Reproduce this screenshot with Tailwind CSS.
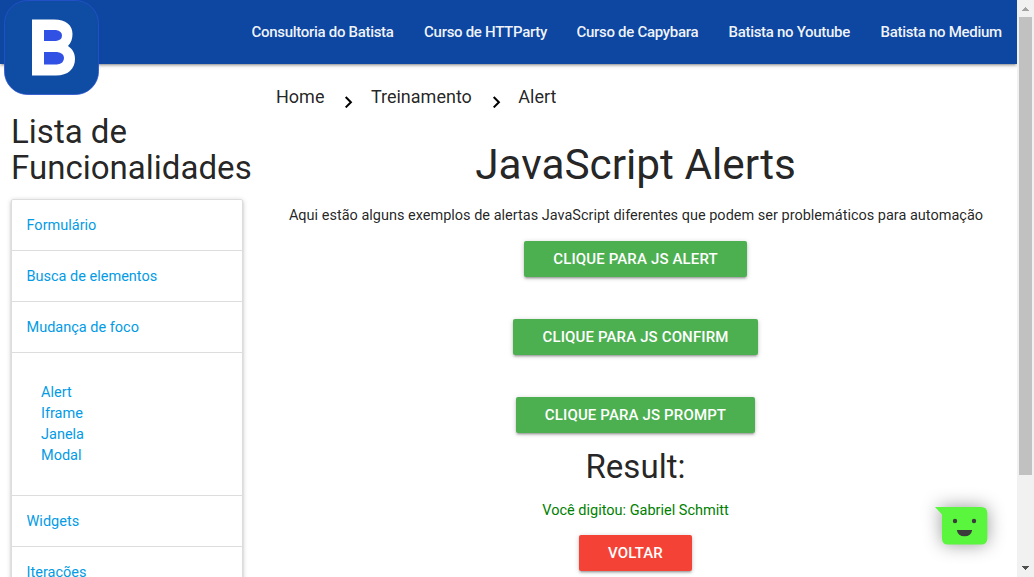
<!DOCTYPE html>
<html lang="pt-BR">
<head>
<meta charset="utf-8">
<title>JavaScript Alerts</title>
<script src="https://cdn.jsdelivr.net/npm/@tailwindcss/browser@4"></script>
</head>
<body class="flex h-[577px] w-[1034px] overflow-hidden bg-white font-[Roboto,sans-serif] text-[14.5px] leading-[21.75px] text-black/87">
<div class="relative h-full w-[1017px] shrink-0 overflow-hidden">
  <nav class="relative z-10 flex h-16 justify-end bg-[#0d47a1] text-[15px] leading-16 font-medium tracking-[-0.3px] text-white/95 shadow-[0_2px_2px_0_rgba(0,0,0,0.14),0_3px_1px_-2px_rgba(0,0,0,0.12),0_1px_5px_0_rgba(0,0,0,0.2)]">
    <svg class="absolute top-0 left-1 h-[95px] w-[95px]" viewBox="0 0 95 95">
      <rect x=".5" y=".5" width="94" height="94" rx="23" fill="#0f4ca3" stroke="#2850cf" stroke-width=".8"/>
      <path d="M28 19.500H50C62 19.500 68.500 25 68.500 34C68.500 39 67 43 64 46C68.500 49 71 53 71 59C71 69 64 75.500 52 75.500H28Z" fill="#fff"/>
      <path d="M40 30H52Q58 31 58 35.500Q58 40 52 41H40ZM40 52H53Q60 53 60 58Q60 63.500 53 64.500H40Z" fill="#3150e4"/>
    </svg>
    <a class="w-[172.600px] px-[15px] whitespace-nowrap">Consultoria do Batista</a>
    <a class="w-[152.400px] px-[15px] whitespace-nowrap">Curso de HTTParty</a>
    <a class="w-[152px] px-[15px] whitespace-nowrap">Curso de Capybara</a>
    <a class="w-[152px] px-[15px] whitespace-nowrap">Batista no Youtube</a>
    <a class="w-[151.500px] px-[15px] whitespace-nowrap">Batista no Medium</a>
  </nav>
  <div class="flex">
    <aside class="w-[254px] shrink-0 pt-[50px] pl-[11px]">
      <h4 class="text-[33.06px] leading-[36.37px]">Lista de<br>Funcionalidades</h4>
      <ul class="mt-[12px] w-[232px] rounded-[2px] border border-[#ddd] text-[#039be5] shadow-[0_2px_2px_0_rgba(0,0,0,0.14),0_3px_1px_-2px_rgba(0,0,0,0.12),0_1px_5px_0_rgba(0,0,0,0.2)]">
        <li class="h-[51px] border-b border-[#ddd] px-[14.5px] leading-[52px]">Formulário</li>
        <li class="h-[51px] border-b border-[#ddd] px-[14.5px] leading-[52px]">Busca de elementos</li>
        <li class="h-[51px] border-b border-[#ddd] px-[14.5px] leading-[52px]">Mudança de foco</li>
        <li class="h-[143px] border-b border-[#ddd] px-[29px] pt-[29px] leading-[21px]">Alert<br>Iframe<br>Janela<br>Modal</li>
        <li class="h-[51px] border-b border-[#ddd] px-[14.5px] leading-[52px]">Widgets</li>
        <li class="h-[51px] px-[14.5px] leading-[52px]">Iterações</li>
      </ul>
    </aside>
    <main class="flex w-[763px] flex-col items-center">
      <div class="flex h-[66px] w-full items-start pt-[19px] pl-[22px] text-[18px] leading-[27px]">
        <span>Home</span>
        <svg class="mt-[13px] mr-[16.5px] ml-5 h-3 w-2.5" viewBox="0 0 10 12" fill="none" stroke="#000" stroke-width="2"><path d="M1.700 1L6.900 6.200L1.700 11.400"/></svg>
        <span>Treinamento</span>
        <svg class="mt-[13px] mr-[16.5px] ml-5 h-3 w-2.5" viewBox="0 0 10 12" fill="none" stroke="#000" stroke-width="2"><path d="M1.700 1L6.900 6.200L1.700 11.400"/></svg>
        <span>Alert</span>
      </div>
      <h3 class="mt-[12px] text-[42.34px] leading-[46.6px]">JavaScript Alerts</h3>
      <p class="mt-[16px] pl-px">Aqui estão alguns exemplos de alertas JavaScript diferentes que podem ser problemáticos para automação</p>
      <button class="mt-[15px] h-9 w-[223px] rounded-[2px] bg-[#4caf50] text-[15px] leading-9 font-medium tracking-[0.14px] text-white shadow-[0_2px_2px_0_rgba(0,0,0,0.14),0_3px_1px_-2px_rgba(0,0,0,0.12),0_1px_5px_0_rgba(0,0,0,0.2)]">CLIQUE PARA JS ALERT</button>
      <button class="mt-[42px] h-9 w-[245px] rounded-[2px] bg-[#4caf50] text-[15px] leading-9 font-medium tracking-[0.14px] text-white shadow-[0_2px_2px_0_rgba(0,0,0,0.14),0_3px_1px_-2px_rgba(0,0,0,0.12),0_1px_5px_0_rgba(0,0,0,0.2)]">CLIQUE PARA JS CONFIRM</button>
      <button class="mt-[42px] h-9 w-[239px] rounded-[2px] bg-[#4caf50] text-[15px] leading-9 font-medium tracking-[0.14px] text-white shadow-[0_2px_2px_0_rgba(0,0,0,0.14),0_3px_1px_-2px_rgba(0,0,0,0.12),0_1px_5px_0_rgba(0,0,0,0.2)]">CLIQUE PARA JS PROMPT</button>
      <h4 class="mt-[16px] text-[33.06px] leading-[36.37px]">Result:</h4>
      <p class="mt-[14px] text-[green]">Você digitou: Gabriel Schmitt</p>
      <button class="mt-[14px] h-9 w-[113px] rounded-[2px] bg-[#f44336] text-[15px] leading-9 font-medium tracking-[0.14px] text-white shadow-[0_2px_2px_0_rgba(0,0,0,0.14),0_3px_1px_-2px_rgba(0,0,0,0.12),0_1px_5px_0_rgba(0,0,0,0.2)]">VOLTAR</button>
    </main>
  </div>
  <svg class="absolute top-[507px] left-[935px] h-[38px] w-[53px] overflow-visible drop-shadow-[0_0_9px_rgba(0,0,0,0.4)]" viewBox="0 0 53 38">
    <path d="M0 0H46Q52.300 0 52.300 6V31.500Q52.300 37.500 46 37.500H13Q7 37.500 7 31.500V7.500Z" fill="#5af53d"/>
    <circle cx="20" cy="14" r="2.200" fill="#3b3b3b"/><circle cx="39" cy="14" r="2.200" fill="#3b3b3b"/>
    <path d="M21.800 23H37.200Q36 29.300 29.500 29.300T21.800 23Z" fill="#3b3b3b"/>
  </svg>
</div>
<div class="flex h-full w-[17px] flex-col items-center bg-[#f1f1f1]">
  <svg class="h-[17px] w-[17px] shrink-0" viewBox="0 0 17 17" shape-rendering="crispEdges"><path d="M8 7h1v1h1v1h1v1h1v1H5v-1h1V9h1V8h1z" fill="#a3a3a3"/></svg>
  <div class="h-[458px] w-[13px] bg-[#c1c1c1]"></div>
  <svg class="mt-auto h-[17px] w-[17px] shrink-0" viewBox="0 0 17 17" shape-rendering="crispEdges"><path d="M5 6h7v1h-1v1h-1v1H9v1H8V9H7V8H6V7H5z" fill="#505050"/></svg>
</div>
</body>
</html>
